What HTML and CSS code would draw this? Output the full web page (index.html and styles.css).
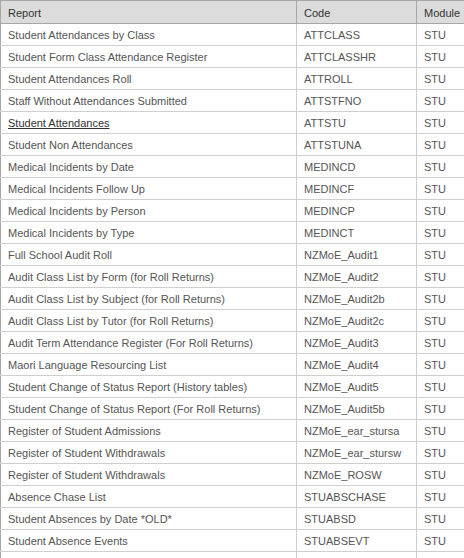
FILE: index.html
```html
<!DOCTYPE html>
<html>
<head>
<meta charset="utf-8">
<link rel="stylesheet" href="styles.css">
</head>
<body>
<table class="reports">
  <colgroup><col class="c-report"><col class="c-code"><col class="c-module"></colgroup>
  <thead>
    <tr><th>Report</th><th>Code</th><th>Module</th></tr>
  </thead>
  <tbody>
    <tr><td><a>Student Attendances by Class</a></td><td>ATTCLASS</td><td>STU</td></tr>
    <tr><td><a>Student Form Class Attendance Register</a></td><td>ATTCLASSHR</td><td>STU</td></tr>
    <tr><td><a>Student Attendances Roll</a></td><td>ATTROLL</td><td>STU</td></tr>
    <tr><td><a>Staff Without Attendances Submitted</a></td><td>ATTSTFNO</td><td>STU</td></tr>
    <tr><td><a class="hover">Student Attendances</a></td><td>ATTSTU</td><td>STU</td></tr>
    <tr><td><a>Student Non Attendances</a></td><td>ATTSTUNA</td><td>STU</td></tr>
    <tr><td><a>Medical Incidents by Date</a></td><td>MEDINCD</td><td>STU</td></tr>
    <tr><td><a>Medical Incidents Follow Up</a></td><td>MEDINCF</td><td>STU</td></tr>
    <tr><td><a>Medical Incidents by Person</a></td><td>MEDINCP</td><td>STU</td></tr>
    <tr><td><a>Medical Incidents by Type</a></td><td>MEDINCT</td><td>STU</td></tr>
    <tr><td><a>Full School Audit Roll</a></td><td>NZMoE_Audit1</td><td>STU</td></tr>
    <tr><td><a>Audit Class List by Form (for Roll Returns)</a></td><td>NZMoE_Audit2</td><td>STU</td></tr>
    <tr><td><a>Audit Class List by Subject (for Roll Returns)</a></td><td>NZMoE_Audit2b</td><td>STU</td></tr>
    <tr><td><a>Audit Class List by Tutor (for Roll Returns)</a></td><td>NZMoE_Audit2c</td><td>STU</td></tr>
    <tr><td><a>Audit Term Attendance Register (For Roll Returns)</a></td><td>NZMoE_Audit3</td><td>STU</td></tr>
    <tr><td><a>Maori Language Resourcing List</a></td><td>NZMoE_Audit4</td><td>STU</td></tr>
    <tr><td><a>Student Change of Status Report (History tables)</a></td><td>NZMoE_Audit5</td><td>STU</td></tr>
    <tr><td><a>Student Change of Status Report (For Roll Returns)</a></td><td>NZMoE_Audit5b</td><td>STU</td></tr>
    <tr><td><a>Register of Student Admissions</a></td><td>NZMoE_ear_stursa</td><td>STU</td></tr>
    <tr><td><a>Register of Student Withdrawals</a></td><td>NZMoE_ear_stursw</td><td>STU</td></tr>
    <tr><td><a>Register of Student Withdrawals</a></td><td>NZMoE_ROSW</td><td>STU</td></tr>
    <tr><td><a>Absence Chase List</a></td><td>STUABSCHASE</td><td>STU</td></tr>
    <tr><td><a>Student Absences by Date *OLD*</a></td><td>STUABSD</td><td>STU</td></tr>
    <tr><td><a>Student Absence Events</a></td><td>STUABSEVT</td><td>STU</td></tr>
    <tr><td>&nbsp;</td><td>&nbsp;</td><td>&nbsp;</td></tr>
  </tbody>
</table>
</body>
</html>
```

FILE: styles.css
```css
html, body {
  margin: 0;
  padding: 0;
  background: #fff;
}
body {
  font-family: "Liberation Sans", Arial, sans-serif;
  font-size: 11px;
  color: #555;
}
.reports {
  border-collapse: collapse;
  width: 464px;
  table-layout: fixed;
}
.c-report { width: 296px; }
.c-code { width: 120px; }
.c-module { width: 48px; }
.reports th {
  background: #dcdcdc;
  color: #333;
  font-weight: normal;
  text-align: left;
  height: 21px;
  padding: 1px 7px 0;
  border: 1px solid #a6a6a6;
}
.reports td {
  height: 20px;
  padding: 1px 7px 0;
  border: 1px solid #cfcfcf;
  white-space: nowrap;
  overflow: hidden;
}
.reports tbody tr:first-child td {
  border-top-color: #a6a6a6;
}
.reports td:first-child,
.reports th:first-child {
  border-left-color: #a6a6a6;
}
.reports td:last-child,
.reports th:last-child {
  border-right-color: #a6a6a6;
}
.reports a {
  color: #555;
  text-decoration: none;
}
.reports a.hover {
  color: #333;
  text-decoration: underline;
}
```
